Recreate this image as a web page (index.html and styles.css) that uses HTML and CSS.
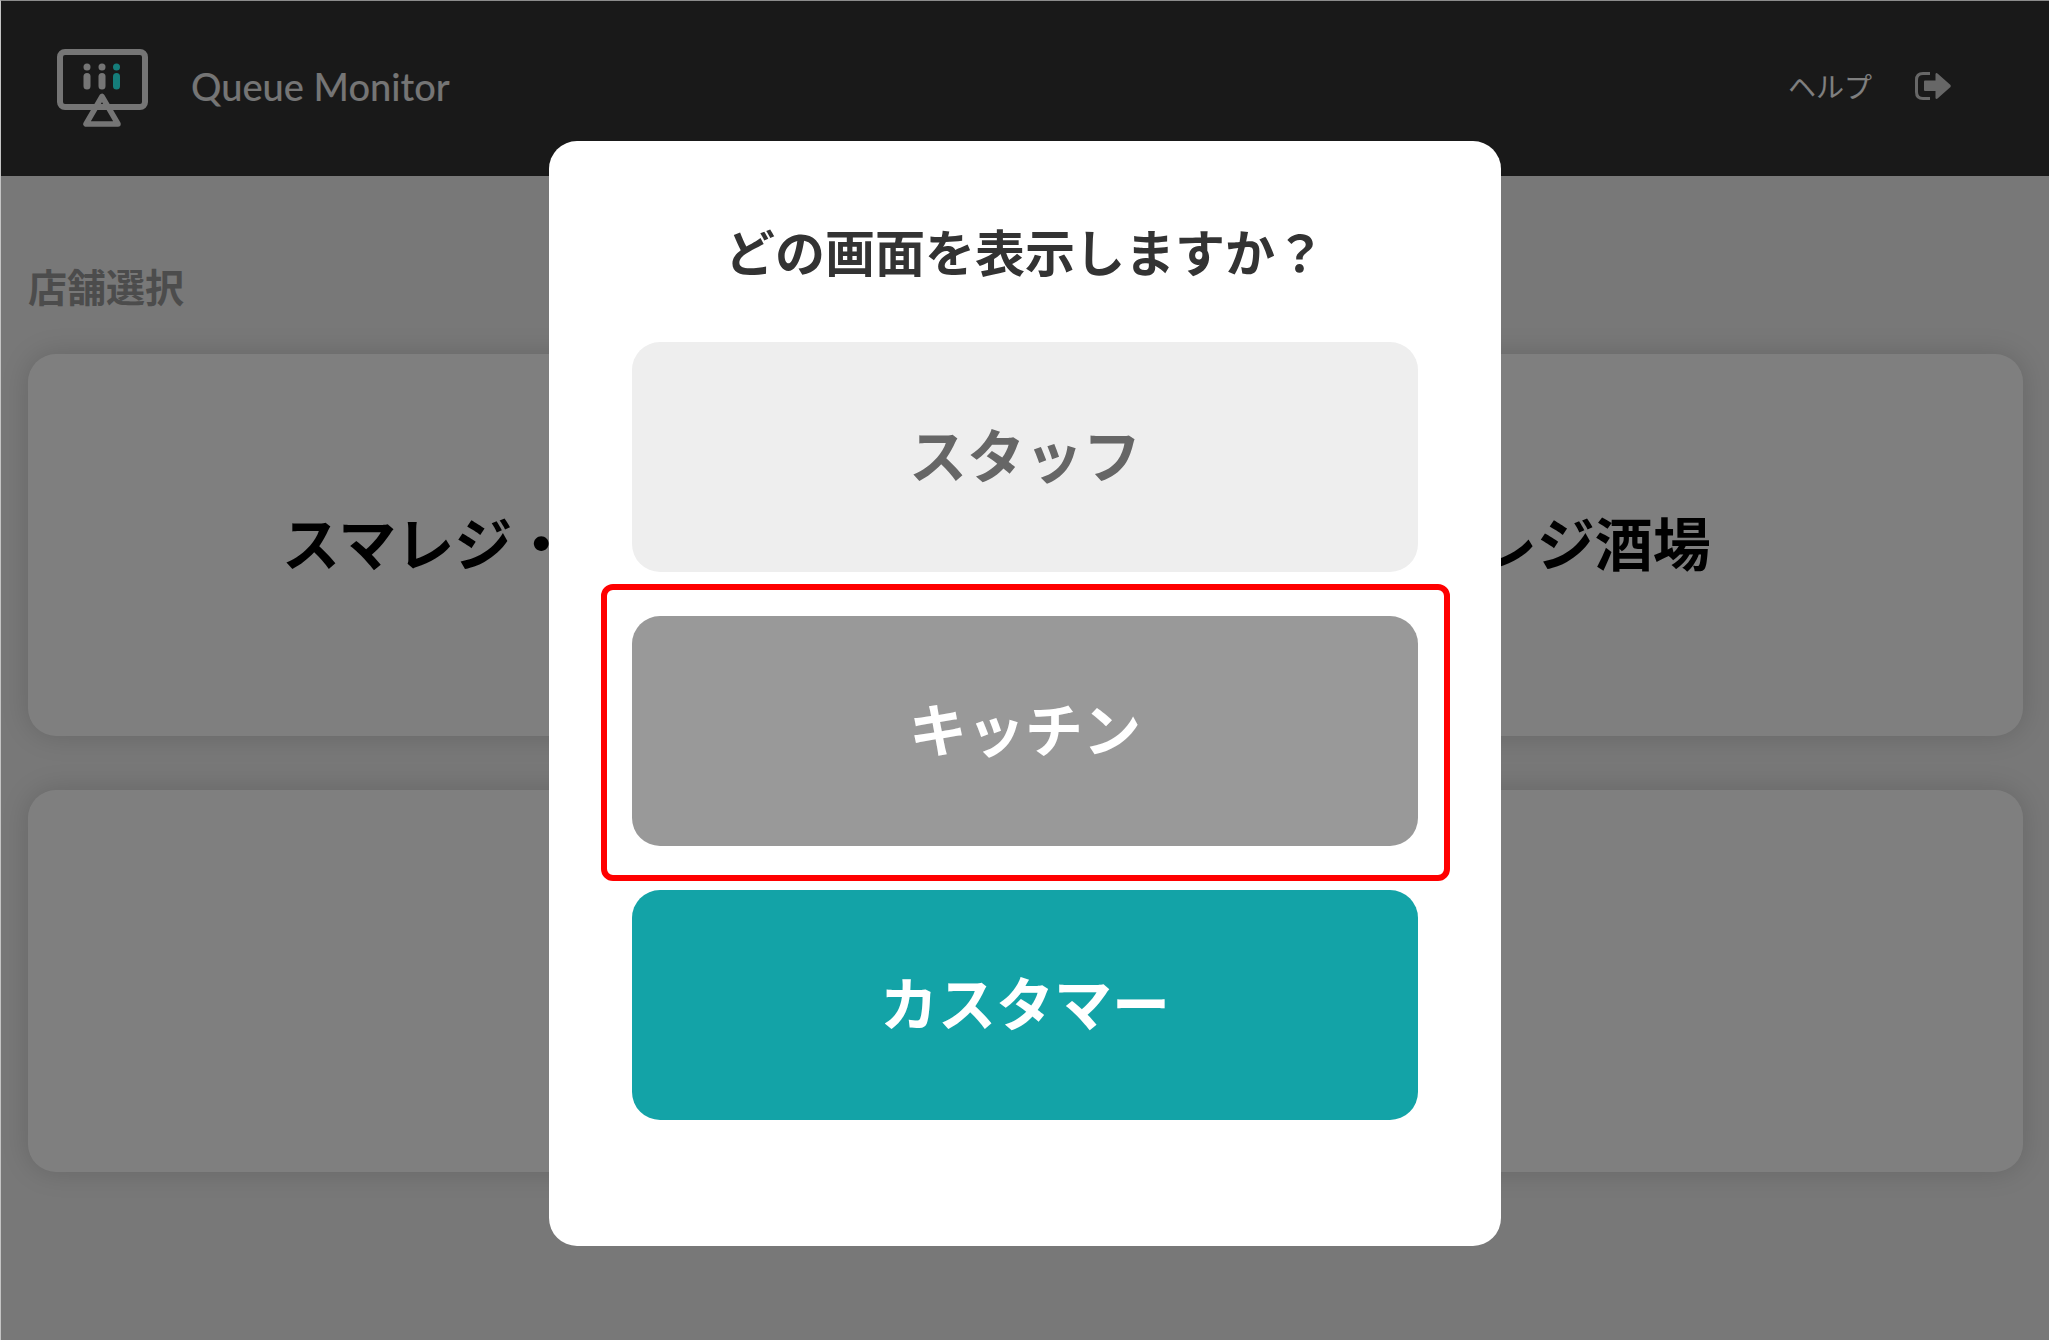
FILE: index.html
```html
<!DOCTYPE html>
<html lang="ja">
<head>
    <meta charset="UTF-8">
    <meta name="viewport" content="width=device-width, initial-scale=1.0">
    <title>Queue Monitor</title>
    <link rel="stylesheet" href="styles.css">
</head>
<body>
    <header class="header">
        <svg class="logo" viewBox="0 -4 92 84" fill="none" stroke="#eaeaea" aria-hidden="true">
            <rect x="4" y="4" width="85" height="55" rx="5" stroke-width="6"/>
            <path d="M46 48.5 L30 76 H62 Z" stroke-width="5.5" stroke-linejoin="round"/>
            <g fill="#eaeaea" stroke="none">
                <circle cx="31" cy="19" r="3.5"/>
                <rect x="27.5" y="25" width="7" height="16.5" rx="3.5"/>
                <circle cx="46" cy="19" r="3.5"/>
                <rect x="42.5" y="25" width="7" height="16.5" rx="3.5"/>
            </g>
            <g fill="#2afaf4" stroke="none">
                <circle cx="60.5" cy="19" r="3.5"/>
                <rect x="57" y="25" width="7" height="16.5" rx="3.5"/>
            </g>
        </svg>
        <span class="brand">Queue Monitor</span>
        <nav class="nav">
            <a href="#help">ヘルプ</a>
            <a href="#logout" aria-label="ログアウト">
                <svg class="logout-icon" viewBox="0 0 36 28" aria-hidden="true">
                    <path d="M15 1.5 H8 Q1.5 1.5 1.5 8 V20 Q1.5 26.5 8 26.5 H15" fill="none" stroke="#cecece" stroke-width="3"/>
                    <path d="M10 8.5 H20.5 V2 Q21 0.5 22.5 1.5 L35.5 13 Q36 14 35.5 15 L22.5 26.5 Q21 27.5 20.5 26 V19 H10 Q9 19 9 18 V9.5 Q9 8.5 10 8.5 Z" fill="#cecece"/>
                </svg>
            </a>
        </nav>
    </header>

    <main class="main">
        <h2>店舗選択</h2>
        <div class="shops">
            <button type="button" class="shop">スマレジ・カフェ</button>
            <button type="button" class="shop">スマレジ酒場</button>
            <button type="button" class="shop"></button>
            <button type="button" class="shop"></button>
        </div>
    </main>

    <div class="overlay">
        <div class="modal" role="dialog" aria-modal="true" aria-labelledby="modal-title">
            <h1 id="modal-title">どの画面を表示しますか？</h1>
            <div class="choices">
                <button type="button" class="choice staff">スタッフ</button>
                <div class="highlight">
                    <button type="button" class="choice kitchen">キッチン</button>
                </div>
                <button type="button" class="choice customer">カスタマー</button>
            </div>
        </div>
    </div>
</body>
</html>
```

FILE: styles.css
```css
/* Global Styles */
* {
    box-sizing: border-box;
}

body {
    font-family: "Noto Sans CJK JP", sans-serif;
    background-color: #f0f0f0;
    color: #333;
    margin: 0;
    min-height: 100vh;
    border-top: 1px solid #8c8c8c;
    border-left: 1px solid #c4c4c4;
    position: relative;
}

button {
    font-family: inherit;
    font-weight: bold;
    font-size: 58px;
    border: none;
    border-radius: 28px;
    padding: 0 0 8px;
    cursor: pointer;
}

/* Header */
.header {
    display: flex;
    align-items: center;
    height: 175px;
    padding: 0 98px 5px 55px;
    background-color: #333;
}

.logo {
    width: 92px;
    height: 84px;
}

.brand {
    font-family: Lato, sans-serif;
    font-size: 38px;
    font-weight: 500;
    margin-left: 43px;
    color: #eaeaea;
}

.nav {
    display: flex;
    align-items: center;
    gap: 43px;
    margin-left: auto;
}

.nav a {
    font-size: 28px;
    color: #fff;
    text-decoration: none;
}

.logout-icon {
    display: block;
    width: 36px;
    height: 28px;
}

/* Shop list */
.main {
    padding: 79px 26px 54px 27px;
}

.main h2 {
    margin: 0 0 39px;
    font-size: 39px;
    line-height: 60px;
    color: #999;
}

.shops {
    display: grid;
    grid-template-columns: 1fr 1fr;
    gap: 54px;
}

.shop {
    height: 382px;
    background-color: #fff;
    color: #000;
    box-shadow: 0 0 28px rgba(0, 0, 0, 0.15);
}

/* Modal */
.overlay {
    position: absolute;
    inset: 0;
    padding-top: 140px;
    background-color: rgba(0, 0, 0, 0.5);
}

.modal {
    max-width: 952px;
    margin: 0 auto;
    padding: 73px 83px 126px;
    border-radius: 28px;
    background-color: #fff;
}

.modal h1 {
    margin: 0 0 56px;
    font-size: 50px;
    line-height: 72px;
    text-align: center;
}

.choices {
    display: grid;
    gap: 44px;
}

.choice {
    width: 100%;
    height: 230px;
    color: #fff;
}

.staff {
    background-color: #eee;
    color: #666;
}

.kitchen {
    background-color: #999;
}

.customer {
    background-color: #13a3a7;
}

/* Red frame round the kitchen button */
.highlight {
    position: relative;
}

.highlight::after {
    content: "";
    position: absolute;
    inset: -32px -32px -35px -31px;
    border: 6px solid #f00;
    border-radius: 12px;
    pointer-events: none;
}
```
